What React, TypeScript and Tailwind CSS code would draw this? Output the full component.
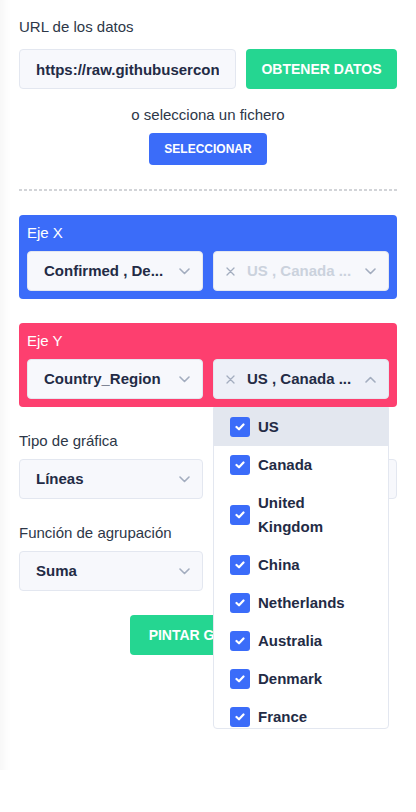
import React from "react";

const font = "font-['Liberation_Sans',Arial,sans-serif]";

const Chevron = ({ up = false }: { up?: boolean }) => (
  <svg width="11" height="7" viewBox="0 0 11 7" className="shrink-0">
    <path
      d={up ? "M1 6 L5.5 1.5 L10 6" : "M1 1 L5.5 5.5 L10 1"}
      fill="none"
      stroke="#a3adbf"
      strokeWidth="1.6"
      strokeLinecap="round"
      strokeLinejoin="round"
    />
  </svg>
);

const Cross = () => (
  <svg width="9" height="9" viewBox="0 0 9 9" className="shrink-0">
    <path d="M1 1 L8 8 M8 1 L1 8" stroke="#a3adbf" strokeWidth="1.3" strokeLinecap="round" />
  </svg>
);

const Check = () => (
  <span className="flex h-5 w-5 shrink-0 items-center justify-center rounded-[3px] bg-[#3b6cf9]">
    <svg width="10" height="8" viewBox="0 0 10 8">
      <path d="M1.5 4 L4 6.3 L8.5 1.5" fill="none" stroke="white" strokeWidth="2.2" strokeLinecap="round" strokeLinejoin="round" />
    </svg>
  </span>
);

type SelectProps = {
  text?: string;
  clearable?: boolean;
  disabled?: boolean;
  open?: boolean;
};

const Select = ({ text, clearable, disabled, open }: SelectProps) => (
  <div
    className={
      "flex h-10 items-center rounded border border-[#e3e7f0] pr-3 " +
      (clearable ? "pl-3 " : "pl-4 ") +
      (open ? "bg-[#edf0f8]" : "bg-[#f7f8fc]")
    }
  >
    {clearable && (
      <span className="mr-3 flex">
        <Cross />
      </span>
    )}
    <span
      className={
        "flex-1 truncate text-[15px] font-bold " + (disabled ? "text-[#cbd2dd]" : "text-[#232b45]")
      }
    >
      {text}
    </span>
    <Chevron up={open} />
  </div>
);

const countries = ["US", "Canada", "United Kingdom", "China", "Netherlands", "Australia", "Denmark", "France"];

const Dropdown = () => (
  <div className="absolute left-0 right-0 top-[calc(100%+8px)] z-10 h-[322px] overflow-hidden rounded-b border border-[#e3e7f0] bg-white">
    {countries.map((c, i) => (
      <div
        key={c}
        className={
          "flex items-center gap-2 py-[7px] pl-4 pr-6 " + (i === 0 ? "bg-[#e3e7ef]" : "")
        }
      >
        <Check />
        <span className="text-[15px] font-bold leading-6 text-[#232b45]">{c}</span>
      </div>
    ))}
  </div>
);

export default function App() {
  return (
    <div className={`${font} min-h-[812px] w-full bg-white`}>
      <div className="h-[770px] px-[19px] pt-[17px] shadow-[inset_14px_0_12px_-12px_rgba(0,0,0,0.05)]">
        <p className="text-[15px] leading-5 text-[#2d3748]">URL de los datos</p>
        <div className="mt-3 flex gap-[10px]">
          <input
            readOnly
            value="https://raw.githubusercontent.com/datasets/covid-19/master/data/countries-aggregated.csv"
            className="h-10 w-[217px] rounded border border-[#e3e7f0] bg-[#f7f8fc] px-4 text-[15px] font-bold text-[#232b45] outline-none"
          />
          <button className="h-10 flex-1 rounded bg-[#25d691] text-[14px] font-bold text-white">
            OBTENER DATOS
          </button>
        </div>

        <p className="mt-4 text-center text-[15px] leading-5 text-[#2d3748]">o selecciona un fichero</p>
        <button className="mx-auto mt-2 block h-8 rounded bg-[#3b6cf9] px-[15px] text-[12px] font-bold text-white">
          SELECCIONAR
        </button>

        <div className="mt-6 h-[2px] bg-[repeating-linear-gradient(to_right,#d2d4d8_0_3px,transparent_3px_5px)]" />

        <div className="mt-6 rounded bg-[#3b6cf9] p-2">
          <p className="text-[15px] leading-5 text-white">Eje X</p>
          <div className="mt-2 grid grid-cols-2 gap-[10px]">
            <Select text="Confirmed , De..." />
            <Select text="US , Canada ..." clearable disabled />
          </div>
        </div>

        <div className="mt-6 rounded bg-[#fd3f6f] p-2">
          <p className="text-[15px] leading-5 text-white">Eje Y</p>
          <div className="mt-2 grid grid-cols-2 gap-[10px]">
            <Select text="Country_Region" />
            <div className="relative">
              <Select text="US , Canada ..." clearable open />
              <Dropdown />
            </div>
          </div>
        </div>

        <p className="mt-6 text-[15px] leading-5 text-[#2d3748]">Tipo de gráfica</p>
        <div className="mt-2 grid grid-cols-2 gap-[10px]">
          <Select text="Líneas" />
          <Select />
        </div>

        <p className="mt-6 text-[15px] leading-5 text-[#2d3748]">Función de agrupación</p>
        <div className="mt-2 grid grid-cols-2 gap-[10px]">
          <Select text="Suma" />
        </div>

        <button className="mx-auto mt-6 block h-10 rounded bg-[#25d691] px-[19px] text-[14px] font-bold text-white">
          PINTAR GRÁFICA
        </button>
      </div>
    </div>
  );
}
